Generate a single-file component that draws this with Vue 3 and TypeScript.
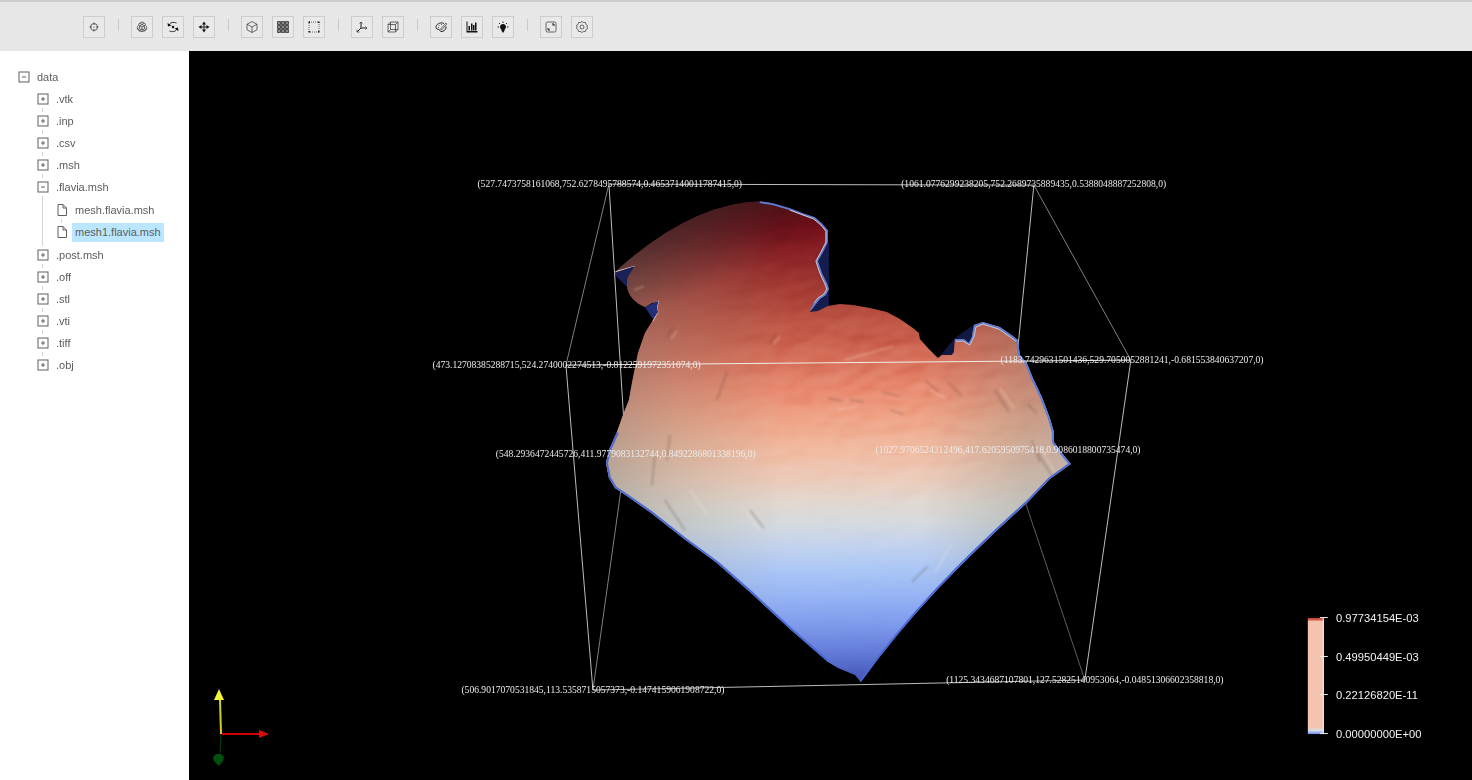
<script setup lang="ts">
import { reactive, ref } from 'vue'

interface Tool {
  name: string
  icon: string
}

interface Folder {
  name: string
  open: boolean
  files: string[]
}

const toolGroups: Tool[][] = [
  [{ name: 'Reset camera', icon: 'target' }],
  [
    { name: 'Orbit', icon: 'orbit' },
    { name: 'Rotate', icon: 'rotate' },
    { name: 'Pan', icon: 'pan' },
  ],
  [
    { name: 'Surface', icon: 'cube' },
    { name: 'Wireframe', icon: 'grid' },
    { name: 'Points', icon: 'dots' },
  ],
  [
    { name: 'Axes', icon: 'axes' },
    { name: 'Bounding box', icon: 'box' },
  ],
  [
    { name: 'Color map', icon: 'palette' },
    { name: 'Legend', icon: 'chart' },
    { name: 'Light', icon: 'bulb' },
  ],
  [
    { name: 'Full screen', icon: 'expand' },
    { name: 'Settings', icon: 'gear' },
  ],
]

const folders = reactive<Folder[]>([
  { name: '.vtk', open: false, files: [] },
  { name: '.inp', open: false, files: [] },
  { name: '.csv', open: false, files: [] },
  { name: '.msh', open: false, files: [] },
  { name: '.flavia.msh', open: true, files: ['mesh.flavia.msh', 'mesh1.flavia.msh'] },
  { name: '.post.msh', open: false, files: [] },
  { name: '.off', open: false, files: [] },
  { name: '.stl', open: false, files: [] },
  { name: '.vti', open: false, files: [] },
  { name: '.tiff', open: false, files: [] },
  { name: '.obj', open: false, files: [] },
])

const rootOpen = ref(true)
const selected = ref('mesh1.flavia.msh')

const corners = [
  { x: 526, y: 170, text: '(527.7473758161068,752.6278495788574,0.46537140011787415,0)' },
  { x: 1056, y: 170, text: '(1061.0776299238205,752.2689735889435,0.5388048887252808,0)' },
  { x: 472, y: 396, text: '(473.12708385288715,524.2740002274513,-0.8122591972351074,0)' },
  { x: 1179, y: 390, text: '(1183.7429631501436,529.7050052881241,-0.681553840637207,0)' },
  { x: 546, y: 507, text: '(548.2936472445726,411.9779083132744,0.8492286801338196,0)' },
  { x: 1024, y: 502, text: '(1027.9706524312496,417.6205950975418,0.9086018800735474,0)' },
  { x: 505, y: 803, text: '(506.9017070531845,113.5358715057373,-0.1474159061908722,0)' },
  { x: 1120, y: 790, text: '(1125.3434687107801,127.52825140953064,-0.04851306602358818,0)' },
]

const ticks = [
  { y: 714, text: '0.97734154E-03' },
  { y: 762, text: '0.49950449E-03' },
  { y: 810, text: '0.22126820E-11' },
  { y: 859, text: '0.00000000E+00' },
]

const bodyPath =
  'M614 273 Q690 203 760 201 L773 203 L790 208 L803 213 L815 217 L822 223 L828 230 L828 242 L823 252 L818 261 L822 273 L827 283 L829 289 L826 295 L820 299 L816 304 L810 312 L818 311 L828 306 L840 304 L853 305 L870 308 L887 312 L900 319 L913 328 L919 333 L920 339 L928 348 L938 358 L942 355 L952 355 L954 352 L955 339 L964 339 L969 343 L972 337 L974 325 L983 322 L1000 327 L1013 336 L1018 340 L1020 355 L1027 363 L1033 378 L1042 397 L1050 418 L1054 432 L1054 442 L1062 453 L1071 464 L1050 479 L1027 503 Q980 545 937 590 Q895 635 861 682 L855 675 L838 668 L828 662 L790 629 L750 592 L717 563 L683 538 L650 512 L627 496 L615 488 L609 478 L606 463 L609 450 L617 432 L623 415 L629 400 L632 383 L638 353 L645 333 L653 320 L658 312 L657 307 L659 301 L652 303 L645 307 Q623 297 628 277 L635 266 Z'
</script>

<template>
  <div class="app">
    <header class="toolbar" role="toolbar" aria-label="View tools">
      <div v-for="(group, g) in toolGroups" :key="g" class="group">
        <button v-for="tool in group" :key="tool.name" type="button" class="tool" :aria-label="tool.name">
          <svg class="glyph" viewBox="0 0 24 24" aria-hidden="true">
            <template v-if="tool.icon === 'target'">
              <circle cx="12" cy="12" r="7" />
              <path d="M12 3v5M12 16v5M3 12h5M16 12h5" />
              <circle class="solid" cx="12" cy="12" r="1" />
            </template>
            <template v-else-if="tool.icon === 'orbit'">
              <path d="M12 7l5 2.500v6L12 18l-5-2.500v-6zM7 9.500l5 2.500 5-2.500M12 12v6" />
              <path d="M5 9C5 0 19 0 19 9M5 9c-6 4 0 13 7 12M19 9c6 4 0 13-7 12M3 14l3 5 5-1M21 14l-3 5-5-1M8 4l4 3 4-3" />
            </template>
            <template v-else-if="tool.icon === 'rotate'">
              <path class="bold" d="M4 8C7 2 13 2 19 4M20 16c-3 6-10 6-15 4" />
              <path class="solid" d="M1 4l1 7 7-2zM23 20l-1-7-7 2z" />
              <circle class="solid" cx="12" cy="12" r="2.500" />
            </template>
            <template v-else-if="tool.icon === 'pan'">
              <path class="bold" d="M12 4v16M4 12h16" />
              <path class="solid" d="M12 1l4 6H8zM12 23l4-6H8zM1 12l6-4v8zM23 12l-6-4v8z" />
            </template>
            <template v-else-if="tool.icon === 'cube'">
              <path d="M12 1l10 5.500v11L12 23 2 17.500v-11zM2 6.500L12 12l10-5.500M12 12v11" />
            </template>
            <template v-else-if="tool.icon === 'grid'">
              <path class="mesh" d="M1 1h6v6H1zM9 1h6v6H9zM17 1h6v6h-6zM1 9h6v6H1zM9 9h6v6H9zM17 9h6v6h-6zM1 17h6v6H1zM9 17h6v6H9zM17 17h6v6h-6z" />
            </template>
            <template v-else-if="tool.icon === 'dots'">
              <rect x="2" y="2" width="20" height="20" stroke-dasharray="2 2" />
              <path class="solid" d="M1 1h3v3H1zM20 1h3v3h-3zM1 20h3v3H1zM20 20h3v3h-3z" />
            </template>
            <template v-else-if="tool.icon === 'axes'">
              <path class="bold" d="M10 2v12h12M10 14l-8 8" />
              <path d="M7 5l3-3 3 3M19 11l3 3-3 3M2 17v5h5" />
            </template>
            <template v-else-if="tool.icon === 'box'">
              <path d="M2 7h15v15H2zM7 2h15v15H7zM2 7l5-5M17 7l5-5M2 22l5-5M17 22l5-5" />
            </template>
            <template v-else-if="tool.icon === 'palette'">
              <path class="bold" d="M18 5C11 1 1 7 2 13c0 4 4 3 6 4 3 2 2 5 6 4 6-1 9-6 8-10" />
              <path d="M11 16L22 4l1 3-10 11zM7 9h2M12 7h2M6 13h2" />
            </template>
            <template v-else-if="tool.icon === 'chart'">
              <path class="solid" d="M1 1h2v19h20v3H1zM5 10h3v9H5zM10 5h3v14h-3zM14 8h3v11h-3zM18 3h3v16h-3z" />
            </template>
            <template v-else-if="tool.icon === 'bulb'">
              <path class="solid" d="M12 6c4 0 6 3 6 6s-3 4-3 7l-2 4h-2l-2-4c0-3-3-4-3-7s2-6 6-6z" />
              <path class="bold" d="M12 1v3M4 4l2 2M20 4l-2 2M1 12h3M20 12h3" />
            </template>
            <template v-else-if="tool.icon === 'expand'">
              <rect x="2" y="2" width="20" height="20" rx="3" />
              <path class="bold" d="M14 6h4v4M6 14v4h4" />
              <path d="M18 6l-3 3M6 18l3-3" />
            </template>
            <template v-else>
              <path d="M9 3Q12 -1 15 3Q20 1 20 7Q25 9 22 12Q25 16 20 17Q20 23 15 21Q12 25 9 21Q4 23 4 17Q-1 15 2 12Q-1 8 4 7Q4 1 9 3Z" />
              <circle cx="12" cy="12" r="4" />
            </template>
          </svg>
        </button>
      </div>
    </header>

    <div class="content">
      <nav class="sidebar" aria-label="Files">
        <div class="row">
          <button type="button" class="switch" aria-label="Toggle data" :aria-expanded="rootOpen" @click="rootOpen = !rootOpen">
            <svg viewBox="0 0 12 12" aria-hidden="true">
              <rect x="1" y="1" width="10" height="10" />
              <path :d="rootOpen ? 'M4 6h4' : 'M4 6h4M6 4v4'" />
            </svg>
          </button>
          <button type="button" class="name">data</button>
        </div>
        <ul v-if="rootOpen" class="list">
          <li v-for="folder in folders" :key="folder.name" class="node">
            <div class="row">
              <button type="button" class="switch" :aria-label="'Toggle ' + folder.name" :aria-expanded="folder.open" @click="folder.open = !folder.open">
                <svg viewBox="0 0 12 12" aria-hidden="true">
                  <rect x="1" y="1" width="10" height="10" />
                  <path :d="folder.open ? 'M4 6h4' : 'M4 6h4M6 4v4'" />
                </svg>
              </button>
              <button type="button" class="name">{{ folder.name }}</button>
            </div>
            <ul v-if="folder.open && folder.files.length" class="list files">
              <li v-for="file in folder.files" :key="file" class="node">
                <div class="row">
                  <svg class="file" viewBox="0 0 12 12" aria-hidden="true">
                    <path d="M2 .5h5l3.500 3.500v7.500H2zM7 .5V4h3.500" />
                  </svg>
                  <button type="button" class="name" :class="{ active: selected === file }" @click="selected = file">{{ file }}</button>
                </div>
              </li>
            </ul>
          </li>
        </ul>
      </nav>

      <main class="viewport">
        <svg class="scene" viewBox="0 0 1604 911" role="img" aria-label="Mesh view">
          <defs>
            <linearGradient id="field" gradientUnits="userSpaceOnUse" x1="750" y1="201" x2="758" y2="683">
              <stop offset="0" stop-color="#5f0d16" />
              <stop offset="0.05" stop-color="#720d19" />
              <stop offset="0.1" stop-color="#861d22" />
              <stop offset="0.18" stop-color="#a43a33" />
              <stop offset="0.26" stop-color="#c05746" />
              <stop offset="0.33" stop-color="#d66f59" />
              <stop offset="0.39" stop-color="#e8896f" />
              <stop offset="0.45" stop-color="#efa285" />
              <stop offset="0.52" stop-color="#f1bba1" />
              <stop offset="0.58" stop-color="#eccbba" />
              <stop offset="0.63" stop-color="#e1d8d1" />
              <stop offset="0.67" stop-color="#d6dade" />
              <stop offset="0.72" stop-color="#c2d2ee" />
              <stop offset="0.77" stop-color="#aac6f6" />
              <stop offset="0.82" stop-color="#98b5f5" />
              <stop offset="0.88" stop-color="#7f9bec" />
              <stop offset="0.94" stop-color="#637bd8" />
              <stop offset="1" stop-color="#4253b5" />
            </linearGradient>
            <linearGradient id="side" gradientUnits="userSpaceOnUse" x1="606" y1="0" x2="1071" y2="0">
              <stop offset="0" stop-color="#74807f" stop-opacity="0.45" />
              <stop offset="0.15" stop-color="#7e8880" stop-opacity="0.24" />
              <stop offset="0.38" stop-color="#8a8a80" stop-opacity="0" />
              <stop offset="0.68" stop-color="#8a8a80" stop-opacity="0" />
              <stop offset="0.9" stop-color="#7e8880" stop-opacity="0.32" />
              <stop offset="1" stop-color="#8c969c" stop-opacity="0.42" />
            </linearGradient>
            <linearGradient id="shade" gradientUnits="userSpaceOnUse" x1="670" y1="218" x2="704" y2="290">
              <stop offset="0" stop-color="#1c1a16" stop-opacity="0.5" />
              <stop offset="1" stop-color="#1c1a16" stop-opacity="0" />
            </linearGradient>
            <linearGradient id="bar" x1="0" y1="0" x2="0" y2="1">
              <stop offset="0" stop-color="#c84a3b" />
              <stop offset="0.015" stop-color="#d9604c" />
              <stop offset="0.03" stop-color="#f4c4b1" />
              <stop offset="0.94" stop-color="#f4c4b1" />
              <stop offset="0.97" stop-color="#d5dbe5" />
              <stop offset="1" stop-color="#688aef" />
            </linearGradient>
            <radialGradient id="rough" gradientUnits="userSpaceOnUse" cx="880" cy="365" r="200">
              <stop offset="0" stop-color="#fff" />
              <stop offset="0.4" stop-color="#fff" stop-opacity="0.7" />
              <stop offset="1" stop-color="#fff" stop-opacity="0.08" />
            </radialGradient>
            <mask id="roughMask" maskUnits="userSpaceOnUse" x="600" y="195" width="480" height="495">
              <path :d="bodyPath" fill="url(#rough)" />
            </mask>
            <clipPath id="body"><path :d="bodyPath" /></clipPath>
            <filter id="relief" x="0" y="0" width="1" height="1" color-interpolation-filters="sRGB">
              <feTurbulence type="fractalNoise" baseFrequency="0.03 0.05" numOctaves="2" seed="8" />
              <feDiffuseLighting surfaceScale="6" diffuseConstant="1" lighting-color="#fff">
                <feDistantLight azimuth="230" elevation="30" />
              </feDiffuseLighting>
            </filter>
            <filter id="soften"><feGaussianBlur stdDeviation="1" /></filter>
          </defs>

          <g transform="scale(1.25) translate(-189 -51)">
            <g class="flaps">
              <path d="M613 273 L635 265 L632 285 L628 288 Z" fill="#1a2156" />
              <path d="M645 307 L660 300 L655 322 Z" fill="#242f78" />
              <path d="M826 236 L829 244 V306 L816 313 L808 313 L816 300 L822 285 L817 262 Z" fill="#151d4f" />
              <path d="M940 356 L955 338 L972 326 L976 336 L968 350 L952 356 Z" fill="#111940" />
            </g>
            <g class="edges">
              <path class="bright" d="M609 184L1034 185" />
              <path class="bright" d="M609 184L626 454M1034 185L1008 450" />
              <path class="dim" d="M609 184L566 365M1034 185L1131 360M626 454L593 690" />
              <path class="faint" d="M1008 450L1085 680" />
              <path class="bright" d="M566 365L593 690M1131 360L1085 680M593 690L1085 680" />
            </g>

            <path :d="bodyPath" fill="url(#field)" />
            <path :d="bodyPath" fill="url(#side)" />
            <path :d="bodyPath" fill="url(#shade)" />
            <g mask="url(#roughMask)" class="relief">
              <rect x="600" y="195" width="480" height="495" filter="url(#relief)" />
            </g>

            <g clip-path="url(#body)">
              <g class="crease dark" filter="url(#soften)">
                <path d="M667 337l6-10M777 333l-8 10M727 372l-10 28M670 435l-3 25M655 455l-3 30M828 398l15 3M850 400l14 2M882 392l18 4M890 410l14 4M925 380l14 12M948 382l14 14M995 390l14 22M1028 405l9 8M1036 450l16 26M1032 440l8 22M750 510l14 18M928 566l-16 16M665 500l20 30" />
              </g>
              <g class="crease light" filter="url(#soften)">
                <path d="M671 339l6-8M634 290l10-4M780 336l-6 8M845 360l48-14M838 410l20-4M930 390l16 8M1040 448l15 24M1000 388l14 20M951 545l-16 28M746 512l14 18M690 490l18 26" />
              </g>
              <g class="rim">
                <path class="wide blue" d="M760 201L773 203L790 208L803 213L815 217L822 223L828 230L828 242L823 252L818 261L822 273L827 283L829 289L826 295L820 299L816 304L812 310" />
                <path class="thin pale" d="M790 210L814 219L821 225L826 231L826 242L821 252L816 261L820 273L825 284L827 289L824 294L818 298L814 303" />
                <path class="wide blue" d="M955 339L964 339L969 343L972 337L974 325L983 322L1000 327L1013 336L1018 340L1020 355L1027 363L1033 378L1042 397L1050 418L1054 432L1054 442L1062 453L1071 464" />
                <path class="thin pale" d="M956 341L963 341L970 345L974 337L976 327L983 324L999 329L1012 338L1016 341" />
                <path class="wide deep" d="M1071 464L1050 479L1027 503Q980 545 937 590Q895 635 861 682M828 662L790 629L750 592L717 563L683 538L650 512L627 496L615 488L609 478L606 463L609 450L617 432" />
                <path class="thin pale" d="M614 272L635 266M652 304L659 301L657 307L658 312L653 321" />
              </g>
            </g>
            <path class="front" d="M566 365L1131 360" />

            <g class="gizmo">
              <path d="M221 734L220 753" stroke="#004510" stroke-width="1" />
              <path d="M213 757L216 754H221L224 757L223 761L219 766L214 761Z" fill="#00500f" />
              <path d="M222 734H260" stroke="#d40000" stroke-width="2" />
              <path d="M259 730L269 734L259 738Z" fill="#d80b0b" />
              <path d="M221 734L220 699" stroke="#cfcf35" stroke-width="2" />
              <path d="M219 689L224 700H214Z" fill="#f4f43a" />
            </g>

            <rect x="1308" y="618" width="16" height="116" fill="url(#bar)" />
            <path class="ticks" d="M1323.500 618V734M1320 617.500H1328M1320 656.500H1328M1320 694.500H1328M1320 733.500H1328" />
          </g>

          <text v-for="corner in corners" :key="corner.text" class="corner" :x="corner.x" :y="corner.y">{{ corner.text }}</text>
          <text v-for="tick in ticks" :key="tick.text" class="tick" x="1434" :y="tick.y">{{ tick.text }}</text>
        </svg>
      </main>
    </div>
  </div>
</template>

<style>
body {
  margin: 0;
  background: #fff;
}
</style>

<style scoped>
.app {
  display: flex;
  flex-direction: column;
  height: 100vh;
  font-family: "Liberation Sans", Arial, sans-serif;
  font-size: 11px;
  color: #5c5c5c;
}

button {
  margin: 0;
  padding: 0;
  border: 0;
  background: none;
  font: inherit;
  color: inherit;
  cursor: pointer;
}

.toolbar {
  display: flex;
  flex: none;
  align-items: center;
  box-sizing: border-box;
  height: 51px;
  padding: 1px 0 0 83px;
  border-top: 2px solid #cdcdcd;
  background: #e7e7e7;
}

.group {
  display: flex;
  align-items: center;
  gap: 9px;
}

.group + .group::before {
  content: "";
  width: 1px;
  height: 12px;
  margin: 0 3px 4px 13px;
  background: #cacaca;
}

.tool {
  display: flex;
  align-items: center;
  justify-content: center;
  box-sizing: border-box;
  width: 22px;
  height: 22px;
  border: 1px solid #cdcdcd;
  background: #e9e9e9;
}

.glyph {
  width: 12px;
  height: 12px;
  fill: none;
  stroke: #3c3c3c;
  stroke-width: 1.500;
}

.glyph .solid {
  fill: #111;
  stroke: none;
}

.glyph .mesh {
  fill: #8a8a8a;
  stroke: #2a2a2a;
}

.glyph .bold {
  stroke: #222;
  stroke-width: 2;
}

.content {
  display: flex;
  flex: 1;
  min-height: 0;
}

.sidebar {
  flex: none;
  box-sizing: border-box;
  width: 189px;
  padding: 15px 0 0 18px;
  background: #fff;
}

.list {
  margin: 0;
  padding: 0 0 0 19px;
  list-style: none;
}

.files {
  padding-top: 1px;
  padding-bottom: 1px;
}

.node {
  position: relative;
}

.node:not(:last-child)::after {
  content: "";
  position: absolute;
  top: 20px;
  bottom: -2px;
  left: 5px;
  width: 1px;
  background: #d4d4d4;
}

.row {
  display: flex;
  align-items: center;
  gap: 4px;
  height: 22px;
}

.switch {
  display: block;
  width: 12px;
  height: 12px;
}

.switch svg,
.file {
  display: block;
  width: 12px;
  height: 12px;
  fill: none;
  stroke: #5f5f5f;
}

.name {
  height: 19px;
  padding: 0 3px;
  line-height: 19px;
  white-space: nowrap;
}

.name.active {
  background: #bae7ff;
}

.viewport {
  flex: 1;
  min-width: 0;
  background: #000;
}

.scene {
  display: block;
  width: 100%;
  height: 100%;
}

.edges path,
.front,
.ticks {
  fill: none;
  stroke-width: 1;
}

.edges .bright {
  stroke: #bdbdbd;
}

.edges .dim {
  stroke: #808080;
}

.edges .faint {
  stroke: #5e5e5e;
}

.front {
  stroke: #f3ece8;
}

.ticks {
  stroke: #f2f2f2;
}

.relief {
  mix-blend-mode: soft-light;
  opacity: 0.25;
}

.crease {
  fill: none;
  stroke-width: 2;
}

.crease.dark {
  stroke: #5c4038;
  opacity: 0.25;
}

.crease.light {
  stroke: #fff0e4;
  opacity: 0.25;
}

.rim path {
  fill: none;
  stroke-linejoin: round;
}

.rim .wide {
  stroke-width: 4;
}

.rim .thin {
  stroke-width: 1;
}

.rim .blue {
  stroke: #5b7fd8;
}

.rim .deep {
  stroke: #4a68d6;
}

.rim .pale {
  stroke: #cfc9cf;
}

.corner {
  fill: #ececec;
  font-family: "Liberation Serif", "Times New Roman", serif;
  font-size: 12px;
  text-anchor: middle;
}

.tick {
  fill: #f2f2f2;
  font-size: 14px;
}
</style>
